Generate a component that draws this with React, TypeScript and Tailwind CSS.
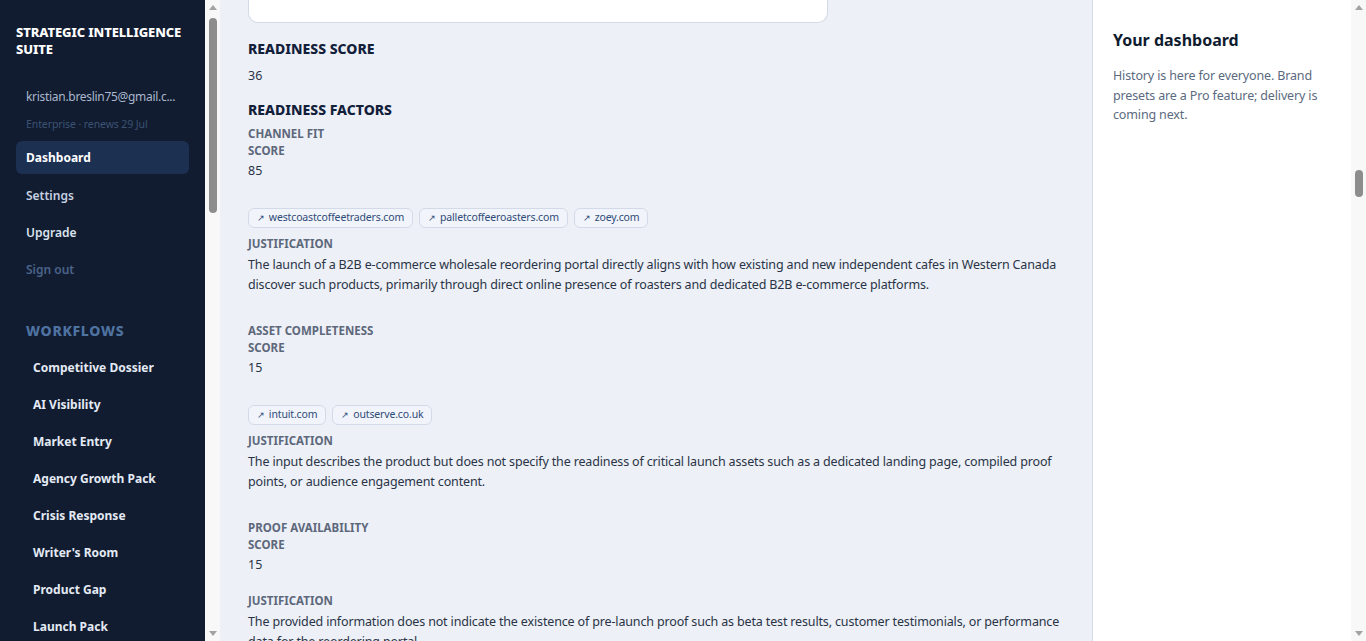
import React from "react";

const workflows = [
  "Competitive Dossier",
  "AI Visibility",
  "Market Entry",
  "Agency Growth Pack",
  "Crisis Response",
  "Writer's Room",
  "Product Gap",
  "Launch Pack",
];

type Factor = {
  name: string;
  score: number;
  sources: string[];
  justification: string;
};

const factors: Factor[] = [
  {
    name: "Channel fit",
    score: 85,
    sources: ["westcoastcoffeetraders.com", "palletcoffeeroasters.com", "zoey.com"],
    justification:
      "The launch of a B2B e-commerce wholesale reordering portal directly aligns with how existing and new independent cafes in Western Canada discover such products, primarily through direct online presence of roasters and dedicated B2B e-commerce platforms.",
  },
  {
    name: "Asset completeness",
    score: 15,
    sources: ["intuit.com", "outserve.co.uk"],
    justification:
      "The input describes the product but does not specify the readiness of critical launch assets such as a dedicated landing page, compiled proof points, or audience engagement content.",
  },
  {
    name: "Proof availability",
    score: 15,
    sources: [],
    justification:
      "The provided information does not indicate the existence of pre-launch proof such as beta test results, customer testimonials, or performance data for the reordering portal.",
  },
];

// classic scrollbar look: arrows + pill thumb
const ScrollTrack = ({ thumbTop, thumbHeight }: { thumbTop: number; thumbHeight: number }) => (
  <div className="w-[15px] shrink-0 h-screen bg-[#f8f8f8] flex flex-col items-center">
    <div className="h-[15px] flex items-center justify-center">
      <svg width="8" height="5" viewBox="0 0 8 5">
        <polygon points="0,5 8,5 4,0" fill="#a3a3a3" />
      </svg>
    </div>
    <div className="flex-1 w-full flex flex-col items-center">
      <div
        className="w-[8px] rounded-full bg-[#8d8d8d]"
        style={{ marginTop: thumbTop, height: thumbHeight }}
      />
    </div>
    <div className="h-[15px] flex items-center justify-center">
      <svg width="8" height="5" viewBox="0 0 8 5">
        <polygon points="0,0 8,0 4,5" fill="#a3a3a3" />
      </svg>
    </div>
  </div>
);

const Label = ({ children, className = "" }: { children: React.ReactNode; className?: string }) => (
  <div className={"text-[11.5px] leading-[17px] font-bold uppercase text-[#5d687b] " + className}>{children}</div>
);

export default function App() {
  return (
    <div className="flex h-screen overflow-hidden font-['Noto_Sans',sans-serif]">
      <aside className="w-[205px] shrink-0 bg-[#111c30] px-4 pt-6">
        <div className="text-white font-extrabold text-[13px] leading-[17px] uppercase tracking-[-0.1px]">
          Strategic Intelligence Suite
        </div>
        <div className="mt-[31px] px-[10px]">
          <div className="text-[12px] leading-4 text-[#a9b7cc] tracking-[-0.3px] truncate">
            kristian.breslin75@gmail.c...
          </div>
          <div className="mt-[11px] text-[10.5px] leading-4 text-[#3c5272] tracking-[-0.1px]">Enterprise · renews 29 Jul</div>
        </div>
        <nav className="mt-[9px] flex flex-col gap-[5px]">
          <div className="h-[33px] rounded-md bg-[#1c3051] px-[10px] flex items-center text-[12px] font-bold text-white">
            Dashboard
          </div>
          <div className="mt-px h-8 px-[10px] flex items-center text-[12px] font-semibold text-[#c5d0e0]">Settings</div>
          <div className="h-8 px-[10px] flex items-center text-[12px] font-semibold text-[#dbe3ef]">Upgrade</div>
          <div className="h-8 px-[10px] flex items-center text-[12px] font-semibold text-[#4a6388]">Sign out</div>
        </nav>
        <div className="mt-[35px] px-[10px] text-[14px] leading-5 font-extrabold tracking-wider uppercase text-[#4f73a1]">
          Workflows
        </div>
        <div className="mt-[10px] flex flex-col gap-1 pl-[7px]">
          {workflows.map((w) => (
            <div key={w} className="h-[33px] px-[10px] flex items-center text-[12px] font-bold text-[#e4eaf4]">
              {w}
            </div>
          ))}
        </div>
      </aside>

      <ScrollTrack thumbTop={3} thumbHeight={195} />

      <main className="flex-1 min-w-0 bg-[#edf0f7] px-7 text-[#2a3446]">
        <div className="w-[580px] h-[23px] bg-white border border-t-0 border-[#d3dae6] rounded-b-[10px]" />

        <h2 className="mt-4 text-[14px] leading-5 font-extrabold uppercase text-[#13203a]">Readiness score</h2>
        <div className="mt-[7px] text-[12.5px] leading-5">36</div>

        <h2 className="mt-[14px] text-[14px] leading-5 font-extrabold uppercase text-[#13203a]">Readiness factors</h2>

        <div className="mt-[5px] flex flex-col gap-[27px]">
          {factors.map((f) => (
            <section key={f.name}>
              <Label>{f.name}</Label>
              <Label>Score</Label>
              <div className="mt-[2px] text-[12.5px] leading-5">{f.score}</div>
              <div className="h-[14px]" />
              {f.sources.length > 0 ? (
                <div className="mt-[13px] mb-[7px] flex gap-[6px]">
                  {f.sources.map((s) => (
                    <span
                      key={s}
                      className="h-5 px-2 flex items-center gap-1 rounded-md border border-[#d3dae7] bg-[#f1f4fa] text-[10.5px] tracking-[-0.15px] text-[#2f4b78]"
                    >
                      <span className="text-[9px]">↗</span>
                      {s}
                    </span>
                  ))}
                </div>
              ) : (
                <div className="h-[3px]" />
              )}
              <Label>Justification</Label>
              <p className="mt-[3px] text-[12.5px] leading-5 tracking-[-0.15px]">{f.justification}</p>
            </section>
          ))}
        </div>
      </main>

      <aside className="w-[259px] shrink-0 bg-white border-l border-[#d6dce7] px-5 pt-7">
        <h3 className="text-[16px] leading-6 font-bold text-[#0f1b2e]">Your dashboard</h3>
        <p className="mt-[14px] text-[12.5px] leading-[19.5px] tracking-[-0.15px] text-[#5b6a80]">
          History is here for everyone. Brand presets are a Pro feature; delivery is coming next.
        </p>
      </aside>

      <ScrollTrack thumbTop={155} thumbHeight={27} />
    </div>
  );
}
